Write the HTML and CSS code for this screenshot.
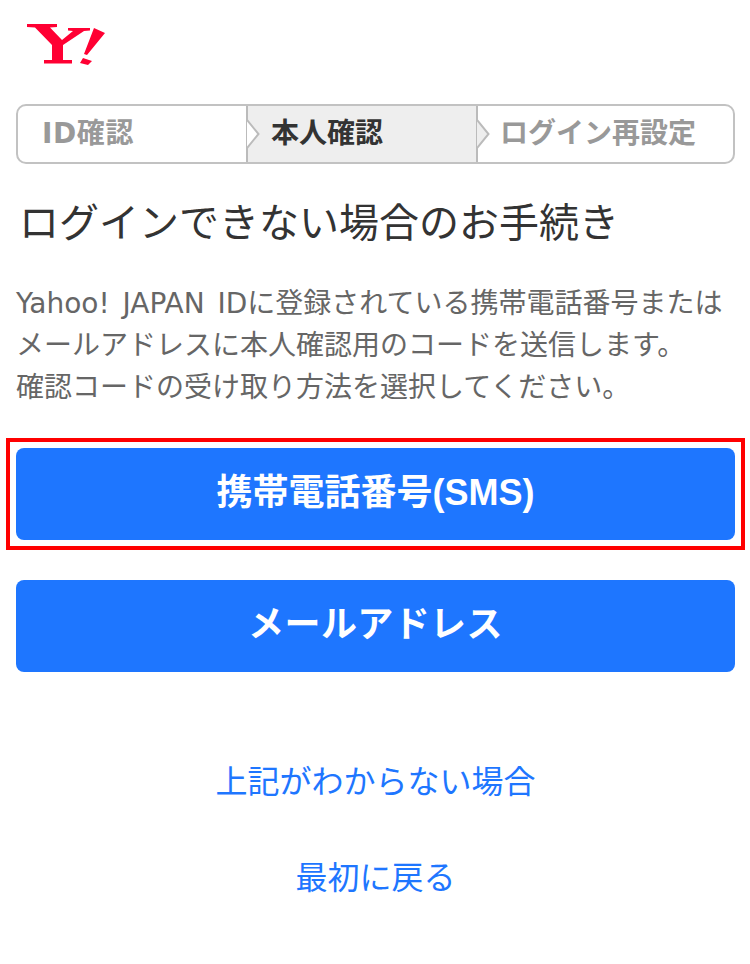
FILE: index.html
```html
<!DOCTYPE html>
<html lang="ja">
<head>
    <meta charset="UTF-8">
    <meta name="viewport" content="width=device-width, initial-scale=1.0">
    <title>ログインできない場合のお手続き</title>
    <link rel="stylesheet" href="styles.css">
</head>
<body>

    <!-- Logo -->
    <header class="logo">
        <svg width="80" height="42" viewBox="0 0 80 42" aria-label="Yahoo! JAPAN">
            <path fill="#ff0033" d="M1 0H31V3L24 3.500L36 16L47 7L42 6.500V4H64V6.500L58 7L37 21V36H46V39.500H18V36H26V21L9 3.500L1 3Z"/>
            <path fill="#ff0033" d="M68 4L79 9L61 31L58 30ZM57 34L66 37L62 41L54 39Z"/>
        </svg>
    </header>

    <!-- Steps -->
    <ol class="steps">
        <li class="step step-first"><span class="step-label">ID確認</span></li>
        <li class="step step-current">
            <span class="step-label">本人確認</span>
            <svg class="chevron" width="14" height="56" viewBox="0 0 14 56"><path fill="#fff" stroke="#bbb" stroke-width="2" d="M1 0V14L12.500 28L1 42V56H0V0Z"/></svg>
        </li>
        <li class="step step-last">
            <span class="step-label">ログイン再設定</span>
            <svg class="chevron" width="14" height="56" viewBox="0 0 14 56"><path fill="#eee" stroke="#bbb" stroke-width="2" d="M1 0V14L12.500 28L1 42V56H0V0Z"/></svg>
        </li>
    </ol>

    <h1 class="title">ログインできない場合のお手続き</h1>

    <p class="lead">Yahoo! JAPAN IDに登録されている携帯電話番号または<br>メールアドレスに本人確認用のコードを送信します。<br>確認コードの受け取り方法を選択してください。</p>

    <!-- Buttons -->
    <div class="highlight">
        <a class="btn btn-sms" href="#"><span class="btn-label">携帯電話番号(SMS)</span></a>
    </div>
    <a class="btn btn-mail" href="#"><span class="btn-label">メールアドレス</span></a>

    <!-- Links -->
    <div class="links">
        <a href="#">上記がわからない場合</a>
        <a href="#">最初に戻る</a>
    </div>

</body>
</html>
```

FILE: styles.css
```css
/* General body styling */
body {
    font-family: "DejaVu Sans", "Noto Sans CJK JP", sans-serif;
    margin: 0;
    padding: 0 15px 0 16px;
    background-color: #fff;
    color: #333;
}

/* Logo */
.logo {
    height: 104px;
    padding: 24px 0 0 26px;
    margin-left: -16px;
    box-sizing: border-box;
}

.logo svg {
    display: block;
}

/* Step indicator */
.steps {
    display: flex;
    height: 60px;
    margin: 0;
    padding: 0;
    list-style: none;
    box-sizing: border-box;
    border: 2px solid #c2c2c2;
    border-radius: 10px;
    font-size: 28px;
    font-weight: 700;
    color: #999;
}

.step {
    position: relative;
    display: flex;
    align-items: center;
    white-space: nowrap;
}

.step-label {
    margin-top: -7px;
}

.step-first {
    width: 228px;
    padding-left: 24px;
    box-sizing: border-box;
    letter-spacing: 0.6px;
}

.step-current {
    width: 230px;
    padding-left: 25px;
    box-sizing: border-box;
    background-color: #eee;
    color: #333;
}

.step-last {
    flex: 1;
    padding-left: 24px;
}

.chevron {
    position: absolute;
    left: 0;
    top: 0;
}

/* Heading and text */
.title {
    margin: 30px 0 0 3px;
    font-size: 40px;
    font-weight: 400;
    line-height: 58px;
    color: #333;
}

.lead {
    margin: 31px 0 0;
    font-size: 28px;
    line-height: 42px;
    color: #666;
    white-space: nowrap;
    word-spacing: 4px;
}

/* Buttons */
.btn {
    display: flex;
    align-items: center;
    justify-content: center;
    height: 92px;
    background-color: #1e76ff;
    border-radius: 8px;
    color: #fff;
    font-size: 36px;
    font-weight: 700;
    text-decoration: none;
}

.btn-label {
    margin-top: -11px;
}

.btn-sms {
    font-family: "Liberation Sans", "Noto Sans CJK JP", sans-serif;
}

.highlight {
    margin: 29px -10px 0;
    padding: 6px;
    border: 4px solid #ff0000;
}

.btn-mail {
    margin-top: 30px;
    letter-spacing: 0.4px;
}

/* Links under the buttons */
.links {
    display: flex;
    flex-direction: column;
    align-items: center;
    gap: 50px;
    margin-top: 87px;
}

.links a {
    font-size: 32px;
    line-height: 46px;
    color: #1e76ff;
    text-decoration: none;
}
```
